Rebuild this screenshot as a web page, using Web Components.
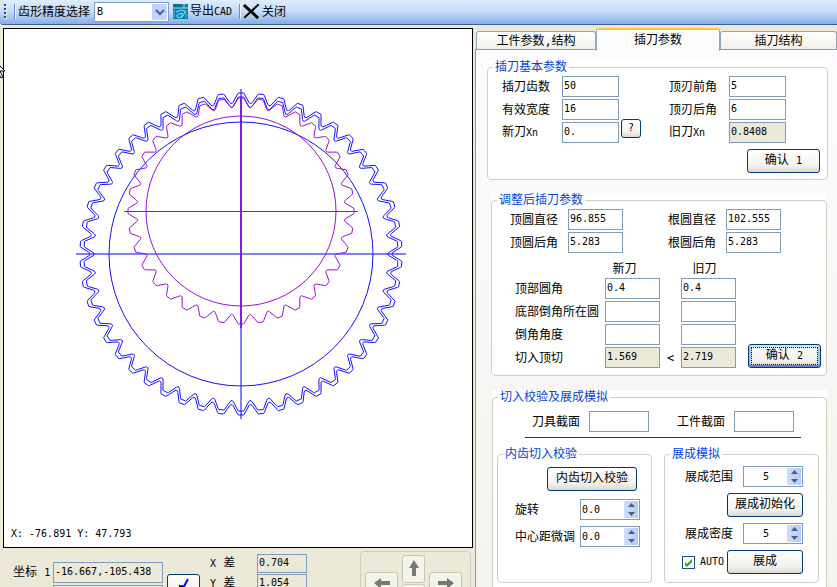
<!DOCTYPE html>
<html lang="zh-CN">
<head>
<meta charset="utf-8">
<title>插刀参数</title>
<style>
  html, body {
    height: 100%;
  }

  body {
    margin: 0;
    overflow: hidden;
    background: #ece9d8;
    color: #000;
    font: 12px/14px "DejaVu Sans Mono", "Noto Sans CJK SC", sans-serif;
  }
</style>
</head>
<body>
<cutter-app></cutter-app>

<script>
/**
 * Rules that every element with controls shares.
 */
const controlStyles = `
  * {
    box-sizing: border-box;
  }

  small {
    font-size: 10px;
  }

  label, span {
    white-space: nowrap;
  }

  input {
    min-width: 0;
    height: 21px;
    margin: 0;
    padding: 0 1px 2px;
    border: 1px solid #7f9db9;
    border-radius: 0;
    background: #fff;
    color: #000;
    font: 10px/14px "DejaVu Sans Mono", monospace;
    outline: none;
  }

  input[readonly] {
    background: #ece9d8;
  }
`

/**
 * Create a template from a string.
 *
 * @param {string} html - The markup.
 * @returns {HTMLTemplateElement} - The template.
 */
function createTemplate (html) {
  const template = document.createElement('template')
  template.innerHTML = html
  return template
}

/**
 * Base class that clones a template to an open shadow root.
 */
class BaseElement extends HTMLElement {
  /**
   * @param {HTMLTemplateElement} template - Template to clone.
   */
  constructor (template) {
    super()

    this.attachShadow({ mode: 'open' })
      .appendChild(template.content.cloneNode(true))
  }
}

/* ---------- push button ---------- */

const buttonTemplate = createTemplate(`
  <style>
    :host {
      display: block;
      height: 24px;
    }

    button {
      box-sizing: border-box;
      width: 100%;
      height: 100%;
      padding: 0 0 2px;
      border: 1px solid #003c74;
      border-radius: 3px;
      background: linear-gradient(#fff, #f3f2ee 70%, #dcd8cc);
      color: inherit;
      font: inherit;
      white-space: nowrap;
    }

    :host([default]) button {
      box-shadow: inset 0 2px #cee7ff, inset 0 -2px #6982ee, inset 2px 0 #a5c3f0, inset -2px 0 #a5c3f0;
      outline: 1px dotted #000;
      outline-offset: -4px;
    }

    :host([flat]) button {
      border-color: #c9c7ba;
      background: #f5f4ea;
    }
  </style>
  <button type="button"><slot></slot></button>
`)

customElements.define('push-button',
  class extends BaseElement {
    constructor () {
      super(buttonTemplate)
    }

    connectedCallback () {
      if (this.hasAttribute('hint')) {
        this.shadowRoot.querySelector('button').setAttribute('aria-label', this.getAttribute('hint'))
      }
    }
  })

/* ---------- labelled text box ---------- */

const fieldTemplate = createTemplate(`
  <style>
    ${controlStyles}

    :host {
      display: flex;
      align-items: center;
    }

    label {
      flex: 0 0 var(--label-width, 60px);
    }

    input {
      width: var(--input-width, 57px);
    }
  </style>
  <label for="box"><slot></slot></label>
  <input id="box" type="text">
`)

customElements.define('text-field',
  class extends BaseElement {
    constructor () {
      super(fieldTemplate)
    }

    connectedCallback () {
      const box = this.shadowRoot.querySelector('input')
      box.value = this.getAttribute('value') || ''
      box.readOnly = this.hasAttribute('readonly')
      box.setAttribute('aria-label', this.textContent)
    }
  })

/* ---------- number box with arrows ---------- */

const spinTemplate = createTemplate(`
  <style>
    ${controlStyles}

    :host {
      display: flex;
      align-items: center;
      justify-content: space-between;
    }

    .box {
      display: flex;
      width: 60px;
      height: 21px;
      padding: 1px;
      border: 1px solid #7f9db9;
      background: #fff;
    }

    input {
      flex: 1;
      width: 20px;
      height: 17px;
      padding: 0;
      border: 0;
    }

    :host([center]) input {
      text-align: center;
    }

    .arrows {
      display: grid;
      width: 14px;
      background: linear-gradient(90deg, #cfdcfd, #b7cbfa);
    }

    button {
      display: grid;
      place-items: center;
      padding: 0;
      border: 0;
      background: none;
    }
  </style>
  <label for="box"><slot></slot></label>
  <div class="box">
    <input id="box" type="text" inputmode="decimal">
    <div class="arrows">
      <button type="button" aria-label="+"><svg width="7" height="4"><path d="M0 4 3.500 0 7 4z" fill="#4d6185"/></svg></button>
      <button type="button" aria-label="-"><svg width="7" height="4"><path d="M0 0 3.500 4 7 0z" fill="#4d6185"/></svg></button>
    </div>
  </div>
`)

customElements.define('spin-field',
  class extends BaseElement {
    constructor () {
      super(spinTemplate)
    }

    connectedCallback () {
      const box = this.shadowRoot.querySelector('input')
      const [up, down] = this.shadowRoot.querySelectorAll('button')
      const step = Number(this.getAttribute('step') || 1)
      const digits = step < 1 ? 1 : 0

      box.value = this.getAttribute('value')
      up.addEventListener('click', () => { box.value = (Number(box.value) + step).toFixed(digits) })
      down.addEventListener('click', () => { box.value = (Number(box.value) - step).toFixed(digits) })
    }
  })

/* ---------- group box ---------- */

const groupTemplate = createTemplate(`
  <style>
    :host {
      display: block;
      background: #fff;
    }

    fieldset {
      box-sizing: border-box;
      min-width: 0;
      height: 100%;
      margin: 0;
      padding: 0 5px;
      border: 1px solid #d0d0bf;
      border-radius: 4px;
    }

    legend {
      padding: 0 2px;
      color: #0046d5;
    }
  </style>
  <fieldset>
    <legend></legend>
    <slot></slot>
  </fieldset>
`)

customElements.define('group-box',
  class extends BaseElement {
    constructor () {
      super(groupTemplate)
    }

    connectedCallback () {
      this.shadowRoot.querySelector('legend').textContent = this.getAttribute('caption')
    }
  })

/* ---------- tool bar ---------- */

const toolbarTemplate = createTemplate(`
  <style>
    :host {
      display: flex;
      box-sizing: border-box;
      align-items: center;
      height: 25px;
      padding: 0 4px 1px;
      border-bottom: 1px solid #3b619c;
      border-radius: 3px 0 0 3px;
      background: linear-gradient(#dfecfe, #c3daf9 50%, #86ade6);
    }

    small {
      font-size: 10px;
    }

    .grip {
      margin-right: 7px;
    }

    .line {
      width: 1px;
      height: 15px;
      margin-right: 3px;
      background: #6a8ccb;
      box-shadow: 1px 0 #f1f9ff;
    }

    .combo {
      position: relative;
      width: 75px;
      height: 20px;
      margin: 0 4px;
    }

    select {
      box-sizing: border-box;
      width: 100%;
      height: 100%;
      padding: 0 2px;
      border: 1px solid #7f9db9;
      border-radius: 0;
      background: #fff;
      appearance: none;
      color: #000;
      font: 10px/14px "DejaVu Sans Mono", monospace;
    }

    .combo svg {
      position: absolute;
      top: 2px;
      right: 2px;
      pointer-events: none;
    }

    button {
      display: flex;
      align-items: center;
      gap: 2px;
      margin-right: 7px;
      padding: 0;
      border: 0;
      background: none;
      color: inherit;
      font: inherit;
    }
  </style>
  <svg class="grip" width="3" height="15" fill="#27418f"><path d="M0 0h2v2H0zM0 4h2v2H0zM0 8h2v2H0zM0 12h2v2H0z"/><path fill="#fff" d="M2 1h1v2H1V2h1zM2 5h1v2H1V6h1zM2 9h1v2H1v-1h1zM2 13h1v2H1v-1h1z"/></svg>
  <div class="line"></div>
  <label for="precision">齿形精度选择</label>
  <div class="combo">
    <select id="precision"><option>B</option><option>A</option></select>
    <svg width="15" height="16">
      <rect width="15" height="16" rx="1" fill="#c1d2fb"/>
      <path d="M4 6l4 4 4-4" fill="none" stroke="#4d6185" stroke-width="2"/>
    </svg>
  </div>
  <button type="button">
    <svg width="15" height="15">
      <rect width="15" height="15" fill="#0a7fae"/>
      <path d="M0 0h8v4H0z" fill="#15678c"/>
      <path d="M0 4h15M11 0v4M3 8q5-3 9-1-1 5-4 7M4 11l5-2v3q-3 3-5 1z" fill="none" stroke="#8fe3f2"/>
      <path d="M1 6v8M13 6v8" stroke="#3fc0dd"/>
    </svg>
    <span>导出<small>CAD</small></span>
  </button>
  <div class="line"></div>
  <button type="button">
    <svg width="17" height="15" fill="none" stroke="#000" stroke-linecap="square"><path d="M2 2 14 13" stroke-width="3"/><path d="M15 1 2 13" stroke-width="2"/></svg>
    关闭
  </button>
`)

customElements.define('tool-bar',
  class extends BaseElement {
    constructor () {
      super(toolbarTemplate)
    }
  })

/* ---------- gear drawing ---------- */

const gearTemplate = createTemplate(`
  <style>
    :host {
      display: grid;
      box-sizing: border-box;
      border: 1px solid #000;
      background: #fff;
      overflow: hidden;
    }

    svg, p {
      grid-area: 1 / 1;
    }

    svg {
      width: 100%;
      height: 100%;
      min-height: 0;
    }

    p {
      align-self: end;
      margin: 0;
      padding: 0 7px 6px;
      font-size: 10px;
    }
  </style>
  <svg viewBox="4 29 468 518" fill="none"></svg>
  <p>X: -76.891 Y: 47.793</p>
`)

customElements.define('gear-view',
  class extends BaseElement {
    constructor () {
      super(gearTemplate)

      const blue = '#1010ff'
      const purple = '#9a10d8'

      this.shadowRoot.querySelector('svg').innerHTML = `
        <path d="M76 254H406M241 89V419" stroke="#8080ff" stroke-width="2"/>
        <path d="M241 98V328" stroke="#7a20e0" stroke-width="2"/>
        <path d="M124 211.500H358" stroke="${purple}"/>
        <circle cx="241" cy="254" r="132" stroke="${blue}"/>
        <circle cx="241" cy="211" r="95" stroke="${purple}"/>
        <path d="${this.#profile(254, 50, 161, 151)}" stroke="${blue}"/>
        <path d="${this.#profile(254, 50, 157, 147)}" stroke="${blue}"/>
        <path d="${this.#profile(211, 36, 113, 104)}" stroke="${purple}"/>
      `
    }

    /**
     * Build the outline of a gear.
     *
     * @param {number} cy - Centre of the gear.
     * @param {number} teeth - Number of teeth.
     * @param {number} tip - Tip radius.
     * @param {number} root - Root radius.
     * @returns {string} - Path data.
     */
    #profile (cy, teeth, tip, root) {
      // Pitch fraction and radius of each corner of a tooth.
      const corners = [
        [-0.41, root + 1], [-0.17, tip - 1], [-0.13, tip],
        [0.13, tip], [0.17, tip - 1], [0.41, root + 1], [0.46, root], [0.54, root]
      ]
      const points = []

      for (let i = 0; i < teeth; i++) {
        for (const [part, radius] of corners) {
          const angle = (i + part) * 2 * Math.PI / teeth
          const x = 241 + radius * Math.sin(angle)
          const y = cy - radius * Math.cos(angle)
          points.push(`${x.toFixed(2)} ${y.toFixed(2)}`)
        }
      }

      return `M${points.join('L')}Z`
    }
  })

/* ---------- coordinates under the drawing ---------- */

const coordTemplate = createTemplate(`
  <style>
    ${controlStyles}

    :host {
      display: flex;
      align-items: flex-start;
      height: 39px;
      padding: 0 2px 0 10px;
      overflow: hidden;
    }

    input {
      background: #ece9d8;
    }

    .points, .deltas {
      display: grid;
      align-items: center;
    }

    .points {
      grid-template-columns: 40px 110px;
      row-gap: 2px;
      padding-top: 14px;
    }

    .next {
      grid-column: 2;
    }

    .deltas {
      grid-template-columns: 47px 50px;
      row-gap: 1px;
      padding-top: 6px;
      margin-left: 10px;
    }

    .deltas input {
      height: 19px;
    }

    .ok {
      width: 33px;
      margin: 26px 0 0 4px;
    }

    .pad {
      display: grid;
      grid-template-columns: 33px 23px 33px;
      column-gap: 4px;
      align-items: start;
      height: 80px;
      margin: 3px 0 0 auto;
      padding: 3px 8px 0 4px;
      border: 1px solid #d0d0bf;
      border-radius: 4px;
    }

    .pad push-button {
      height: 28px;
    }

    .pad .side {
      height: 24px;
      margin-top: 17px;
    }

    .middle {
      display: grid;
      gap: 1px;
    }

    svg {
      display: block;
      margin: auto;
    }
  </style>
  <div class="points">
    <label for="p1">坐标 <small>1</small></label><input id="p1" type="text" value="-16.667,-105.438">
    <input class="next" type="text" aria-label="坐标 2">
  </div>
  <push-button class="ok" hint="确定"><svg width="12" height="14"><path d="M1 8h3v4L10 1" fill="none" stroke="#00f" stroke-width="2"/></svg></push-button>
  <div class="deltas">
    <label for="dx"><small>X</small> 差</label><input id="dx" type="text" value="0.704">
    <label for="dy"><small>Y</small> 差</label><input id="dy" type="text" value="1.054">
  </div>
  <div class="pad">
    <push-button flat class="side" hint="左"><svg width="16" height="11"><path d="M0 5 7 0v3h9v4H7v4z" fill="#777"/></svg></push-button>
    <div class="middle">
      <push-button flat hint="上"><svg width="10" height="16"><path d="M5 0 0 8h3v8h4V8h3z" fill="#777"/></svg></push-button>
      <push-button flat hint="下"></push-button>
    </div>
    <push-button flat class="side" hint="右"><svg width="16" height="11"><path d="M16 5 9 0v3H0v4h9v4z" fill="#777"/></svg></push-button>
  </div>
`)

customElements.define('coord-bar',
  class extends BaseElement {
    constructor () {
      super(coordTemplate)
    }
  })

/* ---------- tabs ---------- */

const tabsTemplate = createTemplate(`
  <style>
    :host {
      display: flex;
      flex-direction: column;
    }

    .tabs {
      display: grid;
      grid-template-columns: 120px 124px 1fr;
      align-items: end;
      height: 21px;
      padding-left: 1px;
    }

    button {
      height: 19px;
      padding: 0;
      border: 1px solid #91a7b4;
      border-width: 1px 1px 0;
      border-radius: 3px 3px 0 0;
      background: linear-gradient(#fff, #f0efe8);
      color: inherit;
      font: inherit;
    }

    button[aria-selected=true] {
      z-index: 1;
      height: 23px;
      margin-bottom: -1px;
      padding-bottom: 2px;
      border-top: 2px solid #ffc73c;
      background: #fcfcfe;
    }

    .page {
      flex: 1;
      min-height: 0;
      padding: 10px 9px 0 11px;
      border: 1px solid #919b9c;
      border-width: 1px 0 0 1px;
      background: linear-gradient(#fcfcfe, #f4f3ee);
    }
  </style>
  <div class="tabs" role="tablist">
    <button type="button" role="tab">工件参数,结构</button>
    <button type="button" role="tab" aria-selected="true">插刀参数</button>
    <button type="button" role="tab">插刀结构</button>
  </div>
  <div class="page" role="tabpanel"><slot></slot></div>
`)

customElements.define('tab-pages',
  class extends BaseElement {
    constructor () {
      super(tabsTemplate)
    }
  })

/* ---------- basic parameters ---------- */

const basicTemplate = createTemplate(`
  <style>
    :host {
      display: block;
    }

    small {
      font-size: 10px;
    }

    .fields {
      display: grid;
      grid-template-columns: 167px 1fr;
      gap: 2px 0;
      padding: 2px 9px 6px;
    }

    .new {
      display: flex;
      gap: 2px;
      height: 21px;
    }

    .help {
      width: 20px;
      height: 19px;
      margin-top: -3px;
    }

    .confirm {
      grid-column: 2;
      justify-self: end;
      width: 73px;
      margin: 4px -7px 0 0;
    }
  </style>
  <group-box caption="插刀基本参数">
    <div class="fields">
      <text-field value="50">插刀齿数</text-field>
      <text-field value="5">顶刃前角</text-field>
      <text-field value="16">有效宽度</text-field>
      <text-field value="6">顶刃后角</text-field>
      <div class="new">
        <text-field value="0.">新刀<small>Xn</small></text-field>
        <push-button class="help"><small>?</small></push-button>
      </div>
      <text-field value="0.8408" readonly>旧刀<small>Xn</small></text-field>
      <push-button class="confirm">确认 <small>1</small></push-button>
    </div>
  </group-box>
`)

customElements.define('basic-params',
  class extends BaseElement {
    constructor () {
      super(basicTemplate)
    }
  })

/* ---------- adjusted parameters ---------- */

const adjustedTemplate = createTemplate(`
  <style>
    ${controlStyles}

    :host {
      display: block;
      --label-width: 58px;
      --input-width: 55px;
    }

    .fields {
      display: grid;
      grid-template-columns: 158px 1fr;
      row-gap: 2px;
      padding: 2px 0 0 13px;
    }

    .edges {
      display: grid;
      grid-template-columns: 90px 55px 21px 55px 1fr;
      align-items: center;
      row-gap: 2px;
      padding: 9px 0 7px 18px;
    }

    .edges label {
      grid-column: 1;
    }

    .edges span {
      text-align: center;
    }

    .new {
      grid-column: 2;
      padding-right: 16px;
    }

    .old {
      grid-column: 4;
      padding-right: 8px;
    }

    .second {
      grid-column: 4;
    }

    .confirm {
      justify-self: end;
      align-self: end;
      width: 73px;
      height: 24px;
      margin-top: -3px;
    }
  </style>
  <group-box caption="调整后插刀参数">
    <div class="fields">
      <text-field value="96.855">顶圆直径</text-field>
      <text-field value="102.555">根圆直径</text-field>
      <text-field value="5.283">顶圆后角</text-field>
      <text-field value="5.283">根圆后角</text-field>
    </div>
    <div class="edges">
      <span class="new">新刀</span><span class="old">旧刀</span>
      <label for="e1">顶部圆角</label><input id="e1" type="text" value="0.4"><input class="second" type="text" value="0.4" aria-label="顶部圆角 旧刀">
      <label for="e2">底部倒角所在圆</label><input id="e2" type="text"><input class="second" type="text" aria-label="底部倒角所在圆 旧刀">
      <label for="e3">倒角角度</label><input id="e3" type="text"><input class="second" type="text" aria-label="倒角角度 旧刀">
      <label for="e4">切入顶切</label><input id="e4" type="text" value="1.569" readonly><span>&lt;</span><input type="text" value="2.719" readonly aria-label="切入顶切 旧刀">
      <push-button class="confirm" default>确认 <small>2</small></push-button>
    </div>
  </group-box>
`)

customElements.define('adjusted-params',
  class extends BaseElement {
    constructor () {
      super(adjustedTemplate)
    }
  })

/* ---------- check and simulation ---------- */

const simulationTemplate = createTemplate(`
  <style>
    ${controlStyles}

    :host {
      display: block;
      --label-width: 57px;
      --input-width: 60px;
    }

    .sections {
      display: grid;
      grid-template-columns: 145px 1fr;
      margin: 0 20px 0 27px;
      padding: 7px 0 5px 7px;
      border-bottom: 1px solid #b80000;
    }

    .groups {
      display: grid;
      grid-template-columns: 155px 155px;
      justify-content: space-between;
      height: 136px;
      margin: 9px 2px 20px -1px;
    }

    .check, .run {
      display: grid;
    }

    .check {
      gap: 6px;
      padding: 6px 6px 0 12px;
    }

    .check push-button {
      justify-self: end;
      width: 90px;
      margin: 0 3px 2px 0;
    }

    .run {
      gap: 6px;
      padding: 5px 10px 0 15px;
    }

    .run push-button {
      justify-self: end;
      width: 76px;
    }

    .last {
      display: flex;
      align-items: center;
      justify-content: space-between;
      margin-left: -3px;
    }

    .last label {
      display: flex;
      align-items: center;
      gap: 5px;
    }

    .tick {
      display: grid;
    }

    .tick input, .tick svg {
      grid-area: 1 / 1;
      width: 13px;
      height: 13px;
    }

    .tick input {
      appearance: none;
      padding: 0;
      border-color: #1c5180;
    }

    .tick svg {
      pointer-events: none;
    }

    .tick input:not(:checked) + svg {
      display: none;
    }
  </style>
  <group-box caption="切入校验及展成模拟">
    <div class="sections">
      <text-field>刀具截面</text-field>
      <text-field>工件截面</text-field>
    </div>
    <div class="groups">
      <group-box caption="内齿切入校验">
        <div class="check">
          <push-button>内齿切入校验</push-button>
          <spin-field value="0.0" step="0.1">旋转</spin-field>
          <spin-field value="0.0" step="0.1">中心距微调</spin-field>
        </div>
      </group-box>
      <group-box caption="展成模拟">
        <div class="run">
          <spin-field value="5" center>展成范围</spin-field>
          <push-button>展成初始化</push-button>
          <spin-field value="5" center>展成密度</spin-field>
          <div class="last">
            <label><span class="tick"><input type="checkbox" checked><svg><path d="M3 6v3l2 2 5-5V3L5 8z" fill="#21a121"/></svg></span><small>AUTO</small></label>
            <push-button>展成</push-button>
          </div>
        </div>
      </group-box>
    </div>
  </group-box>
`)

customElements.define('simulation-params',
  class extends BaseElement {
    constructor () {
      super(simulationTemplate)
    }
  })

/* ---------- application ---------- */

const appTemplate = createTemplate(`
  <style>
    :host {
      display: flex;
      flex-direction: column;
      height: 100%;
    }

    main {
      display: grid;
      grid-template-columns: 475fr 362fr;
      flex: 1;
      min-height: 0;
      padding-top: 3px;
    }

    .drawing {
      display: flex;
      flex-direction: column;
      min-width: 0;
      min-height: 0;
      padding: 0 2px 0 3px;
    }

    gear-view {
      flex: 1;
      min-height: 0;
    }

    coord-bar {
      flex: none;
    }

    tab-pages {
      min-width: 0;
      min-height: 0;
    }

    adjusted-params {
      margin: 13px 1px 14px 4px;
    }

    simulation-params {
      margin: 0 1px 0 5px;
    }

    .pointer {
      position: absolute;
      top: 60px;
      left: -6px;
    }
  </style>
  <tool-bar></tool-bar>
  <main>
    <div class="drawing">
      <gear-view></gear-view>
      <coord-bar></coord-bar>
    </div>
    <tab-pages>
      <basic-params></basic-params>
      <adjusted-params></adjusted-params>
      <simulation-params></simulation-params>
    </tab-pages>
  </main>
  <svg class="pointer" width="13" height="20"><path d="M1 1v14l3-3 3 6 2-1-3-6h5z" fill="#fff" stroke="#000"/></svg>
`)

customElements.define('cutter-app',
  class extends BaseElement {
    constructor () {
      super(appTemplate)
    }
  })
</script>
</body>
</html>
